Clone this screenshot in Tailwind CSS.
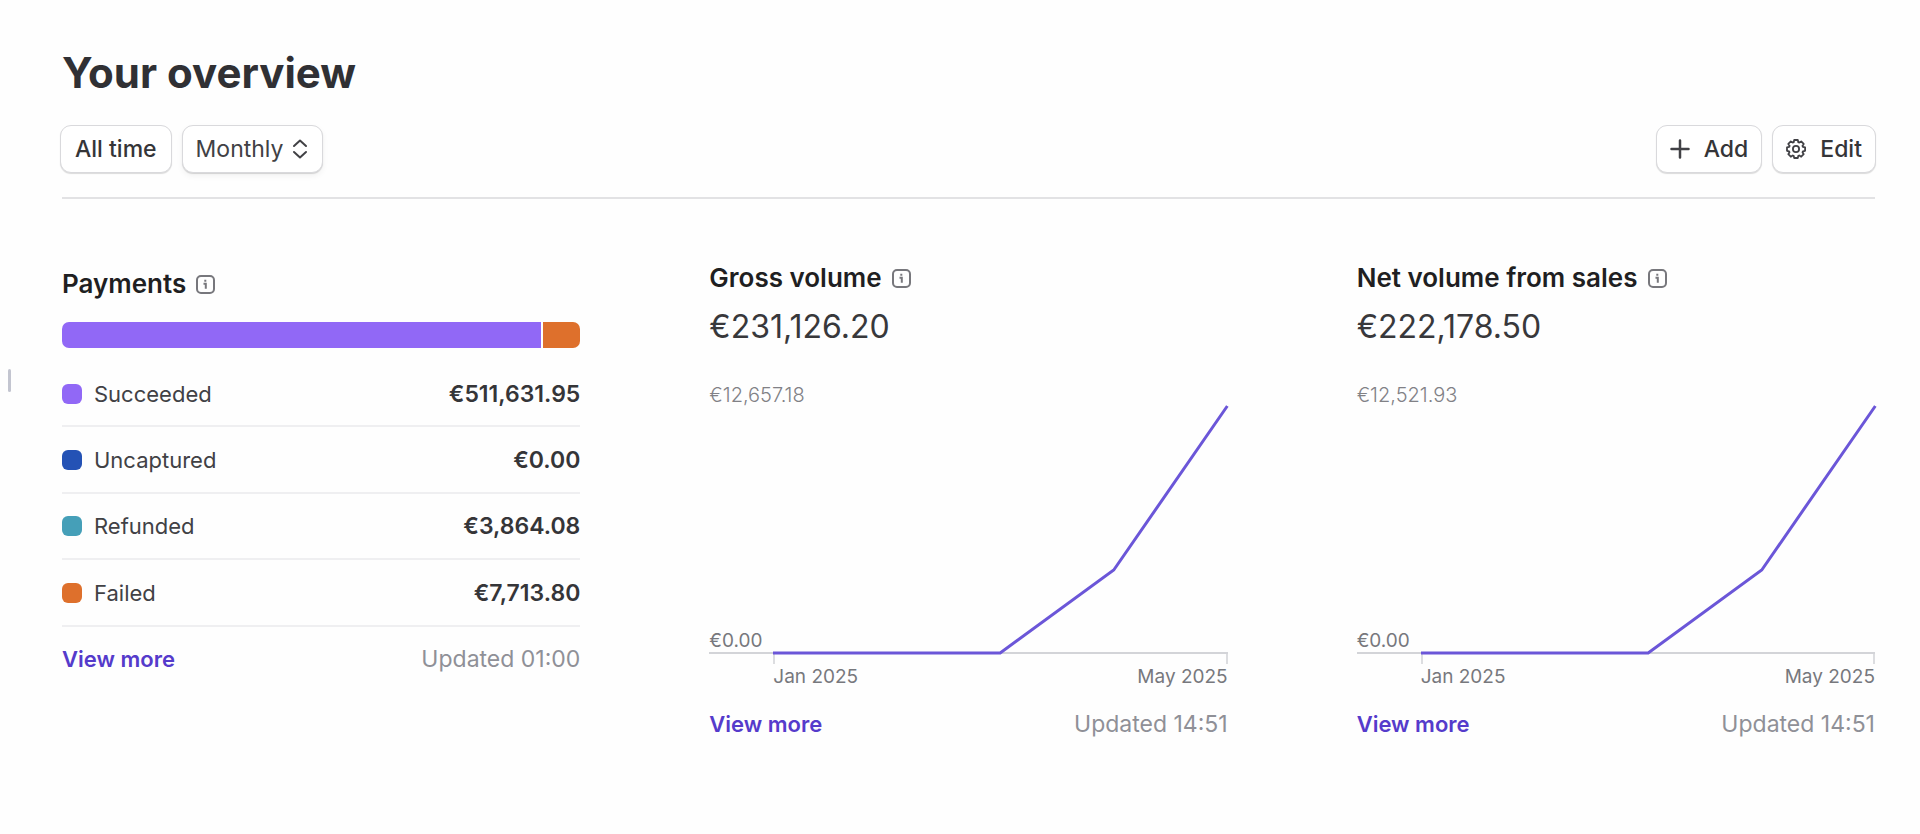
<!DOCTYPE html>
<html lang="en">
<head>
    <meta charset="UTF-8">
    <meta name="viewport" content="width=device-width, initial-scale=1.0">
    <title>Your overview</title>
    <script src="https://cdn.jsdelivr.net/npm/@tailwindcss/browser@4"></script>
</head>
<body class="min-h-screen bg-[#fefefe] font-['Inter',sans-serif] text-[22px] leading-[28px] text-[#414145]">

    <!-- Sidebar resize handle -->
    <div class="fixed top-[369px] left-2 h-[23px] w-[3px] rounded-sm bg-[#c3c5d0]"></div>

    <main class="pt-[46px] pr-[45px] pb-10 pl-[62px]">
        <h1 class="text-[42px] leading-[54px] font-bold text-[#303034]">Your overview</h1>

        <div class="mt-[25px] -mr-px -ml-[2px] flex items-center justify-between">
            <div class="flex gap-[10px]">
                <button type="button" class="h-12 rounded-[11px] border border-[#d9d9dc] bg-white px-[14px] text-[23px] font-medium text-[#353538] shadow-[0_1px_1px_rgba(0,0,0,0.14)]">All time</button>
                <div class="relative">
                    <select aria-label="Interval" class="h-12 w-[141px] appearance-none rounded-[11px] border border-[#d9d9dc] bg-white pl-[13px] text-[23px] text-[#414145] shadow-[0_1px_1px_rgba(0,0,0,0.14),0_3px_6px_rgba(0,0,0,0.05)]">
                        <option>Monthly</option>
                    </select>
                    <svg class="pointer-events-none absolute top-[14px] right-[15px] h-5 w-4" viewBox="0 0 16 20" fill="none" stroke="#414145" stroke-width="2" stroke-linecap="round" stroke-linejoin="round">
                        <path d="M2 7l6-5.500 6 5.500M2 13l6 5.500 6-5.500"/>
                    </svg>
                </div>
            </div>
            <div class="flex gap-[10px]">
                <button type="button" class="flex h-12 items-center gap-[14px] rounded-[11px] border border-[#d9d9dc] bg-white px-[13px] text-[23px] font-medium text-[#353538] shadow-[0_1px_1px_rgba(0,0,0,0.14)]">
                    <svg class="h-5 w-5" viewBox="0 0 20 20" fill="none" stroke="#414145" stroke-width="2.500" stroke-linecap="round">
                        <path d="M10 1.500v17M1.500 10h17"/>
                    </svg>
                    Add
                </button>
                <button type="button" class="flex h-12 items-center gap-[14px] rounded-[11px] border border-[#d9d9dc] bg-white px-[13px] text-[23px] font-medium text-[#353538] shadow-[0_1px_1px_rgba(0,0,0,0.14)]">
                    <svg class="h-5 w-5" viewBox="0 0 20 20" fill="none" stroke="#414145" stroke-width="1.800" stroke-linejoin="round">
                        <path d="M8.200 1h3.600l.5 2.200 1 .4 1.900-1.200 2.500 2.500-1.200 1.900.4 1 2.200.5v3.500l-2.200.5-.4 1 1.200 1.900-2.500 2.500-1.900-1.200-1 .4-.5 2.100H8.200l-.5-2.100-1-.4-1.900 1.200-2.500-2.500 1.200-1.900-.4-1L1 11.800V8.300l2.200-.5.4-1-1.300-1.900 2.500-2.500 1.900 1.200 1-.4z"/>
                        <circle cx="10" cy="10" r="3.100"/>
                    </svg>
                    Edit
                </button>
            </div>
        </div>

        <hr class="mt-6 border-t-2 border-[#e2e2e4]">

        <div class="mt-[62px] grid grid-cols-3 gap-[129px]">

            <!-- Payments -->
            <section class="pt-[6px]">
                <div class="flex items-center gap-[10px]">
                    <h2 class="text-[26px] leading-[34px] font-semibold text-[#1f1f22]">Payments</h2>
                    <button type="button" aria-label="About payments">
                        <svg class="h-[19px] w-[19px]" viewBox="0 0 19 19" fill="none" stroke="#77777c" stroke-width="2">
                            <rect x="1" y="1" width="17" height="17" rx="4"/>
                            <path d="M7.500 8.800h2.300v5M9.300 4.800v2"/>
                        </svg>
                    </button>
                </div>

                <div class="mt-[21px] flex h-[26px] gap-[2px] overflow-hidden rounded-[7px]">
                    <div class="bg-[#9168f6]" style="width: 92.4%"></div>
                    <div class="flex-1 bg-[#de702c]"></div>
                </div>

                <table class="mt-[14px] h-[265px] w-full">
                    <tbody>
                        <tr class="border-b-2 border-[#efeff1]">
                            <th scope="row" class="text-left font-normal">
                                <span class="flex items-center gap-3"><span class="h-5 w-5 rounded-[6px] bg-[#9168f6]"></span>Succeeded</span>
                            </th>
                            <td class="text-right text-[23px] font-semibold text-[#353538]">€511,631.95</td>
                        </tr>
                        <tr class="border-b-2 border-[#efeff1]">
                            <th scope="row" class="text-left font-normal">
                                <span class="flex items-center gap-3"><span class="h-5 w-5 rounded-[6px] bg-[#2452b5]"></span>Uncaptured</span>
                            </th>
                            <td class="text-right text-[23px] font-semibold text-[#353538]">€0.00</td>
                        </tr>
                        <tr class="border-b-2 border-[#efeff1]">
                            <th scope="row" class="text-left font-normal">
                                <span class="flex items-center gap-3"><span class="h-5 w-5 rounded-[6px] bg-[#459fb8]"></span>Refunded</span>
                            </th>
                            <td class="text-right text-[23px] font-semibold text-[#353538]">€3,864.08</td>
                        </tr>
                        <tr class="border-b-2 border-[#efeff1]">
                            <th scope="row" class="text-left font-normal">
                                <span class="flex items-center gap-3"><span class="h-5 w-5 rounded-[6px] bg-[#de702c]"></span>Failed</span>
                            </th>
                            <td class="text-right text-[23px] font-semibold text-[#353538]">€7,713.80</td>
                        </tr>
                    </tbody>
                </table>

                <div class="mt-[18px] flex justify-between">
                    <a href="#" class="font-semibold text-[#553bcb]">View more</a>
                    <span class="text-[23px] text-[#8f9097]">Updated 01:00</span>
                </div>
            </section>

            <!-- Gross volume -->
            <section>
                <div class="flex items-center gap-[10px]">
                    <h2 class="text-[26px] leading-[34px] font-semibold text-[#1f1f22]">Gross volume</h2>
                    <button type="button" aria-label="About gross volume">
                        <svg class="h-[19px] w-[19px]" viewBox="0 0 19 19" fill="none" stroke="#77777c" stroke-width="2">
                            <rect x="1" y="1" width="17" height="17" rx="4"/>
                            <path d="M7.500 8.800h2.300v5M9.300 4.800v2"/>
                        </svg>
                    </button>
                </div>
                <p class="mt-3 text-[32px] leading-[40px] text-[#38383b]">€231,126.20</p>

                <p class="mt-9 text-[20px] leading-[24px] font-light text-[#818186]">€12,657.18</p>
                <div class="flex h-[247px] items-end border-b-2 border-[#d3d4d8]">
                    <span class="w-[64px] shrink-0 text-[19px] leading-[22px] text-[#77787d]">€0.00</span>
                    <svg class="h-[246px] min-w-0 flex-1 overflow-visible" viewBox="0 0 400 246" preserveAspectRatio="none" fill="none" role="img" aria-label="Gross volume by month">
                        <polyline points="0,247 200,247 300,164 400,0" stroke="#6b56d8" stroke-width="3" vector-effect="non-scaling-stroke"/>
                    </svg>
                </div>
                <div class="ml-[64px] flex h-[10px] border-x-2 border-[#dcdde0]"></div>
                <div class="ml-[64px] flex justify-between text-[19px] leading-[26px] text-[#77787d]">
                    <span>Jan 2025</span>
                    <span>May 2025</span>
                </div>

                <div class="mt-5 flex justify-between">
                    <a href="#" class="font-semibold text-[#553bcb]">View more</a>
                    <span class="text-[23px] text-[#8f9097]">Updated 14:51</span>
                </div>
            </section>

            <!-- Net volume -->
            <section>
                <div class="flex items-center gap-[10px]">
                    <h2 class="text-[26px] leading-[34px] font-semibold text-[#1f1f22]">Net volume from sales</h2>
                    <button type="button" aria-label="About net volume from sales">
                        <svg class="h-[19px] w-[19px]" viewBox="0 0 19 19" fill="none" stroke="#77777c" stroke-width="2">
                            <rect x="1" y="1" width="17" height="17" rx="4"/>
                            <path d="M7.500 8.800h2.300v5M9.300 4.800v2"/>
                        </svg>
                    </button>
                </div>
                <p class="mt-3 text-[32px] leading-[40px] text-[#38383b]">€222,178.50</p>

                <p class="mt-9 text-[20px] leading-[24px] font-light text-[#818186]">€12,521.93</p>
                <div class="flex h-[247px] items-end border-b-2 border-[#d3d4d8]">
                    <span class="w-[64px] shrink-0 text-[19px] leading-[22px] text-[#77787d]">€0.00</span>
                    <svg class="h-[246px] min-w-0 flex-1 overflow-visible" viewBox="0 0 400 246" preserveAspectRatio="none" fill="none" role="img" aria-label="Net volume by month">
                        <polyline points="0,247 200,247 300,164 400,0" stroke="#6b56d8" stroke-width="3" vector-effect="non-scaling-stroke"/>
                    </svg>
                </div>
                <div class="ml-[64px] flex h-[10px] border-x-2 border-[#dcdde0]"></div>
                <div class="ml-[64px] flex justify-between text-[19px] leading-[26px] text-[#77787d]">
                    <span>Jan 2025</span>
                    <span>May 2025</span>
                </div>

                <div class="mt-5 flex justify-between">
                    <a href="#" class="font-semibold text-[#553bcb]">View more</a>
                    <span class="text-[23px] text-[#8f9097]">Updated 14:51</span>
                </div>
            </section>
        </div>
    </main>

</body>
</html>
